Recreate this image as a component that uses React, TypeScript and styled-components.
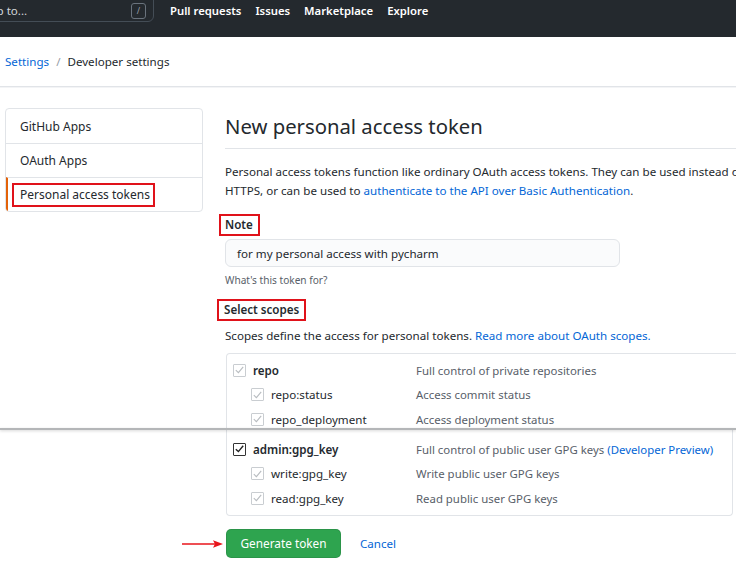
import styled, { createGlobalStyle } from "styled-components";

const GlobalStyle = createGlobalStyle`
  html, body {
    margin: 0;
    padding: 0;
    width: 736px;
    height: 564px;
    overflow: hidden;
    background: #ffffff;
  }
  body {
    font-family: "Noto Sans", "Open Sans", sans-serif;
    font-size: 11.6px;
    color: #24292e;
  }
`;

type Scope = {
  name: string;
  desc: string;
  level: 0 | 1;
  state: "disabled" | "checked";
  preview?: boolean;
};

const topScopes: Scope[] = [
  { name: "repo", desc: "Full control of private repositories", level: 0, state: "disabled" },
  { name: "repo:status", desc: "Access commit status", level: 1, state: "disabled" },
  { name: "repo_deployment", desc: "Access deployment status", level: 1, state: "disabled" },
];

const bottomScopes: Scope[] = [
  {
    name: "admin:gpg_key",
    desc: "Full control of public user GPG keys",
    level: 0,
    state: "checked",
    preview: true,
  },
  { name: "write:gpg_key", desc: "Write public user GPG keys", level: 1, state: "disabled" },
  { name: "read:gpg_key", desc: "Read public user GPG keys", level: 1, state: "disabled" },
];

function CheckMark({ state }: { state: Scope["state"] }) {
  return (
    <Box state={state}>
      <svg width="9" height="8" viewBox="0 0 9 8">
        <path
          d="M0.8 4.2 L3.4 6.6 L8.2 0.8"
          fill="none"
          stroke="currentColor"
          strokeWidth={state === "checked" ? 1.4 : 1.1}
        />
      </svg>
    </Box>
  );
}

function ScopeRows({ scopes }: { scopes: Scope[] }) {
  return (
    <>
      {scopes.map((s) => (
        <ScopeRow key={s.name}>
          <ScopeName level={s.level}>
            <CheckMark state={s.state} />
            <NameText level={s.level}>{s.name}</NameText>
          </ScopeName>
          <ScopeDesc>
            {s.desc}
            {s.preview && <Link> (Developer Preview)</Link>}
          </ScopeDesc>
        </ScopeRow>
      ))}
    </>
  );
}

export default function App() {
  return (
    <>
      <GlobalStyle />
      <Page>
        <TopShot>
          <Header>
            <Search>
              <SearchText>Search or jump to...</SearchText>
              <SlashKey>/</SlashKey>
            </Search>
            <Nav>
              <NavLink>Pull requests</NavLink>
              <NavLink>Issues</NavLink>
              <NavLink>Marketplace</NavLink>
              <NavLink>Explore</NavLink>
            </Nav>
          </Header>

          <Breadcrumb>
            <Link>Settings</Link>
            <Sep>/</Sep>
            <span>Developer settings</span>
          </Breadcrumb>

          <Layout>
            <Sidebar>
              <Menu>
                <MenuItem>GitHub Apps</MenuItem>
                <MenuItem>OAuth Apps</MenuItem>
                <MenuItem selected>
                  <Marked pad="1px 3px 1px 6px" shift="-8px">
                    Personal access tokens
                  </Marked>
                </MenuItem>
              </Menu>
            </Sidebar>

            <Main>
              <Title>New personal access token</Title>
              <Intro>
                Personal access tokens function like ordinary OAuth access tokens. They can
                be used instead of a password for Git over
                <br />
                HTTPS, or can be used to{" "}
                <Link>authenticate to the API over Basic Authentication</Link>.
              </Intro>

              <Marked pad="0 5px 0 4px" shift="-6px">
                <Label>Note</Label>
              </Marked>
              <Input>for my personal access with pycharm</Input>
              <Hint>What's this token for?</Hint>

              <Marked pad="0 5px 0 5px" shift="-8px">
                <Label>Select scopes</Label>
              </Marked>
              <Intro tight>
                Scopes define the access for personal tokens.{" "}
                <Link>Read more about OAuth scopes.</Link>
              </Intro>

              <ScopeBox part="top">
                <ScopeRows scopes={topScopes} />
              </ScopeBox>
            </Main>
          </Layout>
        </TopShot>

        <Seam />

        <BottomShot>
          <Layout flush>
            <SidebarGap />
            <Main>
              <ScopeBox part="bottom">
                <ScopeRows scopes={bottomScopes} />
              </ScopeBox>
              <Actions>
                <Arrow width="42" height="10" viewBox="0 0 42 10">
                  <line x1="0" y1="5" x2="33" y2="5" stroke="#e8141b" strokeWidth="1.6" />
                  <path d="M31 1.2 L41 5 L31 8.8 L33 5 Z" fill="#e8141b" />
                </Arrow>
                <GreenButton>Generate token</GreenButton>
                <Link>Cancel</Link>
              </Actions>
            </Main>
          </Layout>
        </BottomShot>
      </Page>
    </>
  );
}

const Page = styled.div`
  width: 736px;
  height: 564px;
  overflow: hidden;
  background: #ffffff;
`;

const TopShot = styled.div`
  height: 428px;
  overflow: hidden;
`;

const Header = styled.header`
  height: 37px;
  background: #24292e;
  display: flex;
  align-items: flex-start;
  gap: 16px;
`;

const Search = styled.div`
  width: 246px;
  height: 28px;
  margin-top: -6px;
  margin-left: -92px;
  border: 1px solid #444d56;
  border-radius: 6px;
  box-sizing: border-box;
  display: flex;
  align-items: center;
  justify-content: space-between;
  padding: 5px 7px 0 12px;
`;

const SearchText = styled.span`
  color: #d1d5da;
  font-size: 11.6px;
  white-space: nowrap;
`;

const SlashKey = styled.span`
  width: 13px;
  height: 14px;
  border: 1px solid #6a737d;
  border-radius: 3px;
  color: #959da5;
  font-size: 9px;
  display: flex;
  align-items: center;
  justify-content: center;
`;

const Nav = styled.nav`
  display: flex;
  gap: 14px;
`;

const NavLink = styled.span`
  color: #ffffff;
  font-weight: 600;
  font-size: 11.3px;
  line-height: 22px;
  white-space: nowrap;
`;

const Breadcrumb = styled.div`
  height: 49px;
  border-bottom: 1px solid #e1e4e8;
  box-shadow: 0 1px 0 #f3f4f6;
  display: flex;
  align-items: center;
  padding-left: 5px;
  font-size: 11.6px;
  color: #24292e;
`;

const Sep = styled.span`
  color: #959da5;
  margin: 0 7px;
`;

const Link = styled.span`
  color: #0366d6;
`;

const Layout = styled.div<{ flush?: boolean }>`
  display: flex;
  gap: 22px;
  padding: ${({ flush }) => (flush ? "0 0 0 5px" : "21px 0 0 5px")};
`;

const Sidebar = styled.aside`
  width: 198px;
  flex-shrink: 0;
`;

const SidebarGap = styled.div`
  width: 198px;
  flex-shrink: 0;
`;

const Menu = styled.nav`
  border: 1px solid #e1e4e8;
  border-radius: 4px;
  overflow: hidden;
`;

const MenuItem = styled.div<{ selected?: boolean }>`
  height: 34px;
  box-sizing: border-box;
  display: flex;
  align-items: center;
  padding-left: ${({ selected }) => (selected ? "12px" : "14px")};
  border-left: ${({ selected }) => (selected ? "2px solid #e36209" : "none")};
  font-size: 12px;
  color: #24292e;

  & + & {
    border-top: 1px solid #e1e4e8;
  }
`;

const Marked = styled.span<{ pad: string; shift: string }>`
  display: inline-block;
  width: fit-content;
  line-height: 18px;
  border: 2px solid #e0121a;
  padding: ${({ pad }) => pad};
  margin-left: ${({ shift }) => shift};
`;

const Main = styled.main`
  width: 560px;
  flex-shrink: 0;
  display: flex;
  flex-direction: column;
`;

const Title = styled.h2`
  margin: 0;
  font-weight: 400;
  font-size: 20.3px;
  line-height: 36px;
  padding-bottom: 4px;
  border-bottom: 1px solid #e1e4e8;
  white-space: nowrap;
`;

const Intro = styled.p<{ tight?: boolean }>`
  margin: ${({ tight }) => (tight ? "5px 0 8px" : "13px 0 14px")};
  font-size: 11.6px;
  line-height: 19px;
  color: #24292e;
  white-space: nowrap;
`;

const Label = styled.span`
  font-weight: 600;
  font-size: 11.6px;
`;

const Input = styled.div`
  width: 395px;
  height: 28px;
  margin-top: 3px;
  box-sizing: border-box;
  background: #fafbfc;
  border: 1px solid #e1e4e8;
  border-radius: 6px;
  display: flex;
  align-items: center;
  padding-left: 11px;
  font-size: 11.6px;
`;

const Hint = styled.p`
  margin: 6px 0 12px;
  font-size: 10.1px;
  line-height: 14px;
  color: #586069;
`;

const ScopeBox = styled.div<{ part: "top" | "bottom" }>`
  margin-left: 1px;
  width: ${({ part }) => (part === "top" ? "600px" : "507px")};
  box-sizing: border-box;
  border: 1px solid #e1e4e8;
  border-top: ${({ part }) => (part === "top" ? "1px solid #e1e4e8" : "none")};
  border-bottom: ${({ part }) => (part === "top" ? "none" : "1px solid #e1e4e8")};
  border-radius: ${({ part }) => (part === "top" ? "4px 4px 0 0" : "0 0 4px 4px")};
  padding: ${({ part }) => (part === "top" ? "4px 0 6px 6px" : "7px 0 4px 6px")};
`;

const ScopeRow = styled.div`
  height: 24.5px;
  display: grid;
  grid-template-columns: 183px 1fr;
  align-items: center;
  white-space: nowrap;
`;

const ScopeName = styled.div<{ level: 0 | 1 }>`
  display: flex;
  align-items: center;
  gap: 7px;
  padding-left: ${({ level }) => (level === 1 ? "18px" : "0")};
`;

const NameText = styled.span<{ level: 0 | 1 }>`
  font-weight: ${({ level }) => (level === 0 ? 600 : 400)};
  font-size: 11.6px;
  color: #24292e;
`;

const ScopeDesc = styled.span`
  font-size: 11.4px;
  color: #586069;
`;

const Box = styled.span<{ state: "disabled" | "checked" }>`
  width: 11px;
  height: 11px;
  flex-shrink: 0;
  border: 1px solid ${({ state }) => (state === "checked" ? "#333333" : "#c9cdd1")};
  border-radius: 1px;
  color: ${({ state }) => (state === "checked" ? "#222222" : "#b8bcc0")};
  display: flex;
  align-items: center;
  justify-content: center;
`;

const Seam = styled.div`
  height: 2px;
  background: #b4b6b8;
  box-shadow: 0 1px 3px rgba(0, 0, 0, 0.18);
  position: relative;
`;

const BottomShot = styled.div``;

const Actions = styled.div`
  position: relative;
  display: flex;
  align-items: center;
  gap: 19px;
  margin-top: 13px;
  margin-left: 1px;
`;

const Arrow = styled.svg`
  position: absolute;
  left: -44px;
  top: 10px;
`;

const GreenButton = styled.button`
  width: 115px;
  height: 29px;
  border: 1px solid rgba(27, 31, 35, 0.12);
  border-radius: 5px;
  background: #2ea44f;
  color: #ffffff;
  font-family: inherit;
  font-size: 11.8px;
  padding: 0;
`;
